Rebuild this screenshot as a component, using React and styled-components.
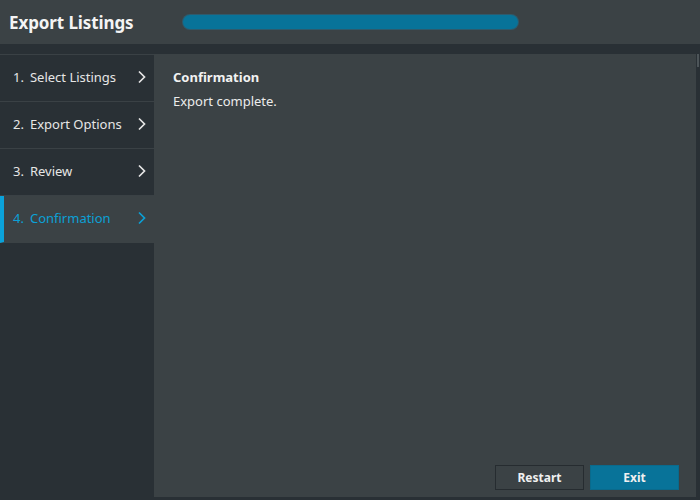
import React from "react";
import styled, { createGlobalStyle } from "styled-components";

const Global = createGlobalStyle`
  html, body { margin: 0; padding: 0; background: #293035; }
  body { font-family: "Noto Sans", "Open Sans", sans-serif; }
  #root { width: 700px; height: 500px; }
`;

const Frame = styled.div`
  width: 700px;
  height: 500px;
  display: flex;
  flex-direction: column;
  background: #293035;
  overflow: hidden;
`;

const Header = styled.header`
  height: 44px;
  flex: none;
  display: flex;
  align-items: center;
  background: #3b4245;
  padding-left: 9px;
  box-sizing: border-box;
`;

const Title = styled.h1`
  margin: 0;
  width: 174px;
  font-size: 17px;
  font-weight: 700;
  color: #f4f4f4;
  letter-spacing: -0.1px;
`;

const Progress = styled.div`
  width: 335px;
  height: 14px;
  border-radius: 7px;
  background: #087399;
  box-shadow: 0 0 0 1px #2e5a6c;
`;

const Body = styled.div`
  flex: 1;
  display: flex;
  padding-top: 10px;
  min-height: 0;
`;

const Sidebar = styled.nav`
  width: 154px;
  flex: none;
  display: flex;
  flex-direction: column;
  border-top: 1px solid #3a4145;
`;

const Step = styled.div`
  height: 47px;
  flex: none;
  display: flex;
  align-items: center;
  justify-content: space-between;
  padding: 0 7px 2px ${(p) => (p.$active ? "9px" : "13px")};
  box-sizing: border-box;
  font-size: 13px;
  color: ${(p) => (p.$active ? "#0ba0d6" : "#e6e6e6")};
  background: ${(p) => (p.$active ? "#3b4245" : "transparent")};
  border-left: ${(p) => (p.$active ? "4px solid #0aa2da" : "none")};
  border-bottom: 1px solid ${(p) => (p.$last ? "transparent" : "#3a4145")};
`;

const StepLabel = styled.span`
  white-space: nowrap;
`;

const Num = styled.span`
  margin-right: 6px;
`;

const Chevron = ({ color }) => (
  <svg width="10" height="14" viewBox="0 0 10 14">
    <path d="M2 1.5 L7.5 7 L2 12.5" fill="none" stroke={color} strokeWidth="1.7" />
  </svg>
);

const Main = styled.section`
  width: 542px;
  flex: none;
  background: #3b4245;
  display: flex;
  flex-direction: column;
  padding: 14px 17px 7px 19px;
  box-sizing: border-box;
  margin-bottom: 3px;
`;

const Heading = styled.div`
  font-size: 13px;
  font-weight: 700;
  color: #f2f2f2;
  line-height: 18px;
`;

const Text = styled.div`
  font-size: 13px;
  color: #ececec;
  line-height: 18px;
  margin-top: 6px;
`;

const Footer = styled.div`
  margin-top: auto;
  display: flex;
  justify-content: flex-end;
  gap: 6px;
`;

const Button = styled.button`
  width: 89px;
  height: 25px;
  font-family: inherit;
  font-size: 12px;
  font-weight: 700;
  color: #f0f0f0;
  border: 1px solid ${(p) => (p.$primary ? "#0a6a8c" : "#262c30")};
  background: ${(p) => (p.$primary ? "#087399" : "#3b4245")};
  padding: 0;
`;

const ScrollTrack = styled.div`
  width: 4px;
  flex: none;
  display: flex;
  justify-content: center;
`;

const ScrollThumb = styled.div`
  width: 2px;
  height: 13px;
  background: #4d5559;
`;

const steps = ["Select Listings", "Export Options", "Review", "Confirmation"];

export default function App() {
  return (
    <>
      <Global />
      <Frame>
        <Header>
          <Title>Export Listings</Title>
          <Progress />
        </Header>
        <Body>
          <Sidebar>
            {steps.map((s, i) => {
              const active = i === 3;
              return (
                <Step key={s} $active={active} $last={i === 3}>
                  <StepLabel>
                    <Num>{i + 1}.</Num>
                    {s}
                  </StepLabel>
                  <Chevron color={active ? "#0ba0d6" : "#e6e6e6"} />
                </Step>
              );
            })}
          </Sidebar>
          <Main>
            <Heading>Confirmation</Heading>
            <Text>Export complete.</Text>
            <Footer>
              <Button>Restart</Button>
              <Button $primary>Exit</Button>
            </Footer>
          </Main>
          <ScrollTrack>
            <ScrollThumb />
          </ScrollTrack>
        </Body>
      </Frame>
    </>
  );
}
